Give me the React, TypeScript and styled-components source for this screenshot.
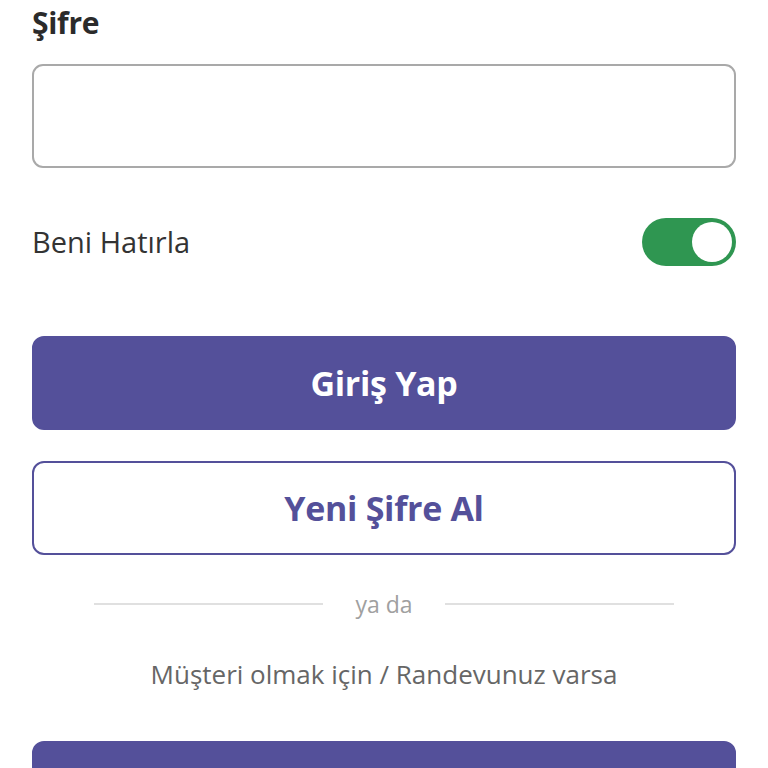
import React, { useState } from 'react';
import styled, { createGlobalStyle } from 'styled-components';

const GlobalStyle = createGlobalStyle`
  html, body {
    margin: 0;
    padding: 0;
    background: #ffffff;
    overflow: hidden;
  }
  body {
    font-family: 'Open Sans', 'Noto Sans', sans-serif;
    -webkit-font-smoothing: antialiased;
  }
  * {
    box-sizing: border-box;
  }
`;

const purple = '#54509a';

const Page = styled.div`
  display: flex;
  flex-direction: column;
  padding: 0 32px;

  & > * {
    flex-shrink: 0;
  }
`;

const FieldLabel = styled.label`
  font-size: 30px;
  font-weight: 700;
  color: #2b2b2b;
  line-height: 36px;
  padding-top: 5px;
  letter-spacing: -0.3px;
`;

const PasswordInput = styled.input`
  margin-top: 23px;
  height: 104px;
  width: 100%;
  border: 2px solid #a9a9a9;
  border-radius: 11px;
  padding: 0 20px;
  font-size: 28px;
  font-family: inherit;
  outline: none;
  background: #fff;
`;

const RememberRow = styled.div`
  margin-top: 50px;
  height: 48px;
  display: flex;
  align-items: center;
  justify-content: space-between;
`;

const RememberText = styled.span`
  font-size: 29px;
  color: #333333;
  line-height: 48px;
`;

const Switch = styled.button<{ on: boolean }>`
  position: relative;
  width: 94px;
  height: 48px;
  border: none;
  padding: 0;
  border-radius: 24px;
  background: ${({ on }) => (on ? '#2f9651' : '#c8c8c8')};
  cursor: pointer;

  &::after {
    content: '';
    position: absolute;
    top: 4px;
    left: ${({ on }) => (on ? '50px' : '4px')};
    width: 40px;
    height: 40px;
    border-radius: 50%;
    background: #ffffff;
  }
`;

const ActionButton = styled.button<{ variant: 'solid' | 'outline'; gapTop: number }>`
  margin-top: ${({ gapTop }) => gapTop}px;
  width: 100%;
  height: 94px;
  border-radius: 12px;
  font-family: inherit;
  font-size: 34px;
  font-weight: 700;
  letter-spacing: -0.3px;
  cursor: pointer;
  border: 2px solid ${purple};
  background: ${({ variant }) => (variant === 'solid' ? purple : '#ffffff')};
  color: ${({ variant }) => (variant === 'solid' ? '#ffffff' : purple)};
`;

const Divider = styled.div`
  margin-top: 34px;
  height: 30px;
  padding: 0 62px 0 62px;
  display: flex;
  align-items: center;
  gap: 32px;
`;

const DividerLine = styled.span`
  flex: 1;
  height: 2px;
  background: #e0e0e0;
`;

const DividerText = styled.span`
  font-size: 23px;
  color: #a0a0a0;
  line-height: 30px;
`;

const Subtext = styled.p`
  margin: 38px 0 0;
  text-align: center;
  font-size: 26px;
  line-height: 34px;
  color: #666666;
`;

export default function App() {
  const [remember, setRemember] = useState(true);

  return (
    <>
      <GlobalStyle />
      <Page>
        <FieldLabel htmlFor="password">Şifre</FieldLabel>
        <PasswordInput id="password" type="password" />
        <RememberRow>
          <RememberText>Beni Hatırla</RememberText>
          <Switch on={remember} onClick={() => setRemember(!remember)} aria-label="Beni Hatırla" />
        </RememberRow>
        <ActionButton variant="solid" gapTop={70}>Giriş Yap</ActionButton>
        <ActionButton variant="outline" gapTop={31}>Yeni Şifre Al</ActionButton>
        <Divider>
          <DividerLine />
          <DividerText>ya da</DividerText>
          <DividerLine />
        </Divider>
        <Subtext>Müşteri olmak için / Randevunuz varsa</Subtext>
        <ActionButton variant="solid" gapTop={50}>Şube Randevusu</ActionButton>
      </Page>
    </>
  );
}
